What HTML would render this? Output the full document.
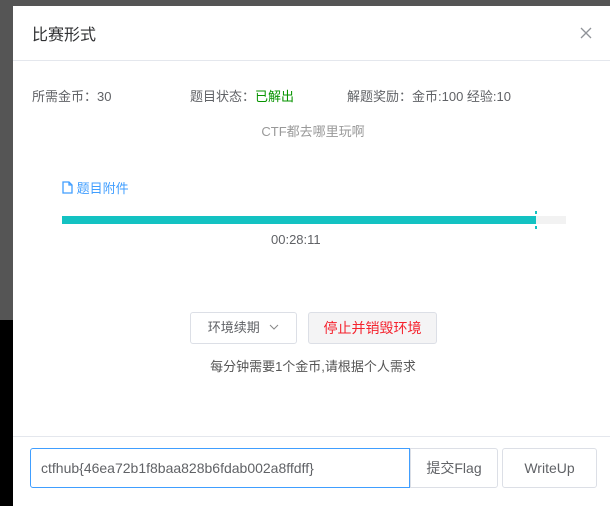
<!DOCTYPE html>
<html><head><meta charset="utf-8"><style>
*{box-sizing:border-box;margin:0;padding:0}
body{width:610px;height:496px;overflow:hidden;background:#000;position:relative;font-family:"Liberation Sans","Noto Sans CJK SC",sans-serif;font-size:13px;color:#606266}
.bg{position:absolute;left:0;top:0;width:610px;height:320px;background:#555}
.m{position:absolute;left:13px;top:6px;width:600px;height:500px;background:#fff}
.a{position:absolute;white-space:nowrap}
.btn{position:absolute;border:1px solid #dcdfe6;border-radius:3px;background:#fff;text-align:center;font-size:14px}
</style></head><body>
<div class="bg"></div>
<div class="m">
<div class="a" style="left:19px;top:15px;font-size:16px;color:#303133">比赛形式</div>
<svg class="a" style="left:567px;top:21px" width="12" height="12" viewBox="0 0 12 12"><path d="M1 1L11 11M11 1L1 11" stroke="#909399" stroke-width="1.3"/></svg>
<div class="a" style="left:0;top:54px;width:600px;height:1px;background:#e4e7ed"></div>
<div class="a" style="left:19px;top:80px">所需金币：30</div>
<div class="a" style="left:177px;top:80px">题目状态：<span style="color:#079400">已解出</span></div>
<div class="a" style="left:334px;top:80px">解题奖励：金币:100 经验:10</div>
<div class="a" style="left:0;width:600px;top:115px;text-align:center;color:#999">CTF都去哪里玩啊</div>
<div class="a" style="left:49px;top:172px;color:#409eff"><svg width="11" height="13" viewBox="0 0 11 13" style="vertical-align:-1px"><path d="M1 1H7L10 4V12H1Z M7 1V4H10" fill="none" stroke="#409eff" stroke-width="1.3"/></svg> 题目附件</div>
<div class="a" style="left:49px;top:210px;width:504px;height:8px;background:#f2f2f2"></div>
<div class="a" style="left:49px;top:210px;width:474px;height:8px;background:#13c2c2"></div>
<div class="a" style="left:522px;top:205px;width:2px;height:3px;background:#13c2c2"></div>
<div class="a" style="left:522px;top:220px;width:2px;height:3px;background:#13c2c2"></div>
<div class="a" style="left:258px;top:226px">00:28:11</div>
<div class="btn" style="left:177px;top:306px;width:107px;height:32px;line-height:30px;font-size:13px">环境续期 <svg width="10" height="6" viewBox="0 0 10 6" style="margin-left:6px;vertical-align:2px"><path d="M1 1L5 5L9 1" fill="none" stroke="#888" stroke-width="1"/></svg></div>
<div class="btn" style="left:295px;top:306px;width:129px;height:32px;line-height:30px;background:#f4f4f5;color:#f5222d">停止并销毁环境</div>
<div class="a" style="left:0;width:600px;top:350px;text-align:center;color:#555">每分钟需要1个金币,请根据个人需求</div>
<div class="a" style="left:0;top:430px;width:600px;height:1px;background:#e4e7ed"></div>
<div class="a" style="left:17px;top:442px;width:380px;height:40px;border:1px solid #409eff;border-radius:3px 0 0 3px;padding-left:10px;line-height:38px;font-size:14px">ctfhub{46ea72b1f8baa828b6fdab002a8ffdff}</div>
<div class="btn" style="left:397px;top:442px;width:88px;height:40px;line-height:38px;border-radius:0 3px 3px 0">提交Flag</div>
<div class="btn" style="left:489px;top:442px;width:95px;height:40px;line-height:38px">WriteUp</div>
</div>
</body></html>
